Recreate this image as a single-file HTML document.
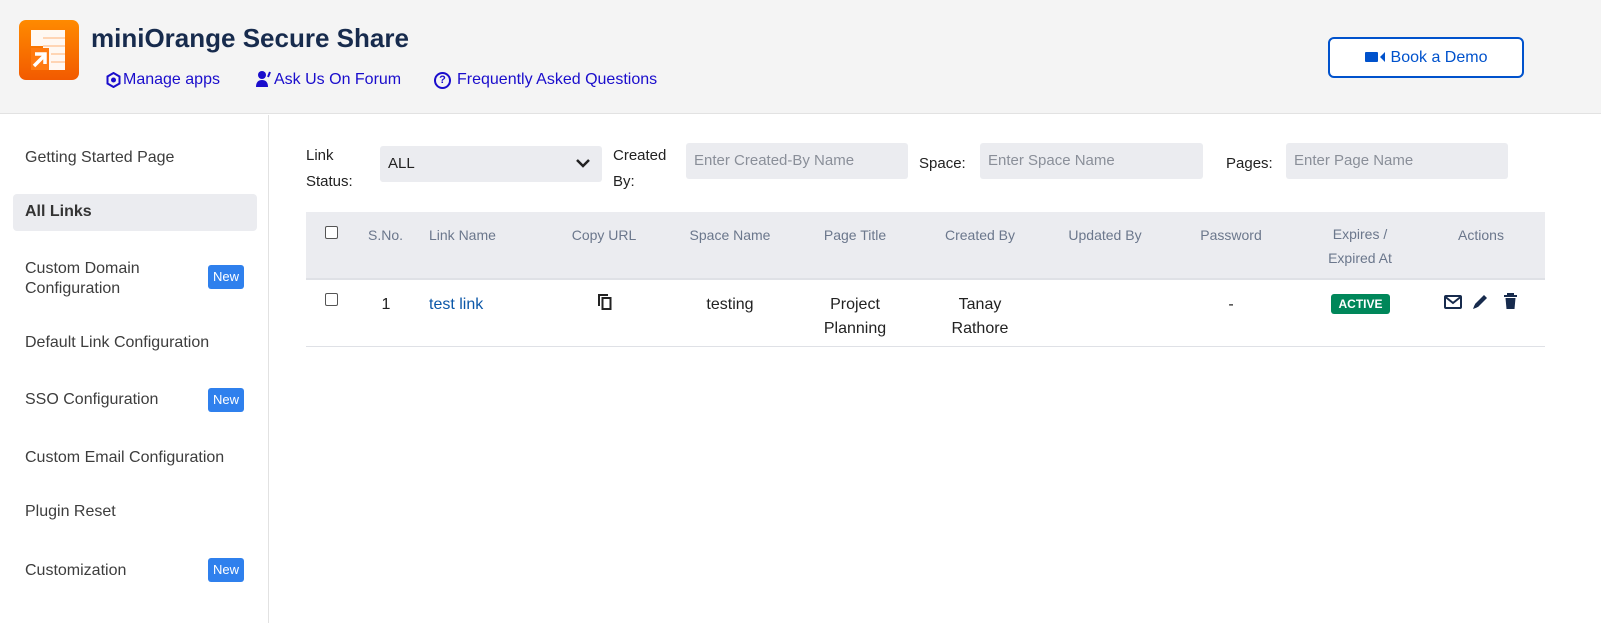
<!DOCTYPE html>
<html><head><meta charset="utf-8"><style>
*{margin:0;padding:0;box-sizing:border-box}
body{width:1601px;height:623px;background:#fff;font-family:"Liberation Sans",sans-serif;position:relative;overflow:hidden;color:#172b4d}
.a{position:absolute;white-space:nowrap}
.hdr{position:absolute;left:0;top:0;width:1601px;height:114px;background:#f4f4f4;border-bottom:1px solid #e2e2e2}
.side{position:absolute;left:268px;top:115px;width:1px;height:508px;background:#e2e2e2}
.nav{font-size:16px;color:#3d3d3d;left:25px}
.new{position:absolute;left:208px;width:36px;height:24px;background:#2f80ed;color:#fff;font-size:13px;border-radius:3px;text-align:center;line-height:24px}
.lnk{font-size:16px;color:#1a0dcc;top:71px}
.lbl{font-size:15px;color:#222}
.inp{position:absolute;background:#ebecf0;border-radius:3px;height:36px;font-size:15px;color:#8a8f99;line-height:36px;padding-left:8px}
.th{font-size:14px;color:#6b778c;top:227px;text-align:center}
.td{font-size:16px;color:#222;top:293px;text-align:center;line-height:24px}
.cb{position:absolute;width:13px;height:13px;border:1px solid #555;border-radius:2px;background:#fff}
</style></head><body>
<div class="hdr"></div>
<div class="side"></div>
<svg class="a" style="left:19px;top:20px" width="60" height="60" viewBox="0 0 60 60"><defs><linearGradient id="g" x1="0" y1="0" x2="0" y2="1"><stop offset="0" stop-color="#ff8a00"/><stop offset="1" stop-color="#f25a00"/></linearGradient></defs><rect width="60" height="60" rx="7" fill="url(#g)"/><path d="M12 10h34v40H24V26H12z" fill="#fff" opacity=".95"/><path d="M24 18h22M24 26h22M32 34h14M32 42h14" stroke="#ffc9a0" stroke-width="1.5"/><rect x="12" y="28" width="18" height="22" fill="#ff7a10"/><path d="M15 46l10-10M16 34h10v10" stroke="#fff" stroke-width="3.5" fill="none"/></svg>
<div class="a" style="left:91px;top:23px;font-size:26px;font-weight:bold;color:#172b4d">miniOrange Secure Share</div>
<svg class="a" style="left:106px;top:72px" width="15" height="16" viewBox="0 0 15 16"><path d="M7.5 1l6 3.5v7l-6 3.5-6-3.5v-7z" stroke="#1a0dcc" stroke-width="2" fill="none"/><circle cx="7.5" cy="8" r="2.5" fill="#1a0dcc"/></svg>
<div class="a lnk" style="left:123px">Manage apps</div>
<svg class="a" style="left:256px;top:70px" width="16" height="18" viewBox="0 0 16 18"><circle cx="6" cy="5" r="4" fill="#1a0dcc"/><path d="M0 17c0-5 2.5-7 6-7s6 2 6 7z" fill="#1a0dcc"/><path d="M14 2l-2 5" stroke="#1a0dcc" stroke-width="2"/></svg>
<div class="a lnk" style="left:274px">Ask Us On Forum</div>
<div class="a" style="left:434px;top:72px;width:17px;height:17px;border:2px solid #1a0dcc;border-radius:50%;font-size:11px;text-align:center;line-height:13px;font-weight:bold;color:#1a0dcc">?</div>
<div class="a lnk" style="left:457px">Frequently Asked Questions</div>
<div class="a" style="left:1328px;top:37px;width:196px;height:41px;border:2px solid #0052cc;border-radius:6px;background:#fff;color:#0052cc;font-size:16px;line-height:37px;text-align:center"><span style="display:inline-block;width:13px;height:10px;background:#0052cc;border-radius:1px;margin-right:2px"></span><span style="display:inline-block;width:0;height:0;border-top:5px solid transparent;border-bottom:5px solid transparent;border-right:5px solid #0052cc;margin-right:6px"></span>Book a Demo</div>

<div class="a nav" style="top:149px">Getting Started Page</div>
<div class="a" style="left:13px;top:194px;width:244px;height:37px;background:#ebecf0;border-radius:4px"></div>
<div class="a nav" style="top:203px;font-weight:bold;color:#333">All Links</div>
<div class="a nav" style="top:259px;line-height:20px">Custom Domain<br>Configuration</div>
<div class="new" style="top:265px">New</div>
<div class="a nav" style="top:334px">Default Link Configuration</div>
<div class="a nav" style="top:391px">SSO Configuration</div>
<div class="new" style="top:388px">New</div>
<div class="a nav" style="top:449px">Custom Email Configuration</div>
<div class="a nav" style="top:503px">Plugin Reset</div>
<div class="a nav" style="top:562px">Customization</div>
<div class="new" style="top:558px">New</div>

<div class="a lbl" style="left:306px;top:143px;line-height:26px">Link<br>Status:</div>
<div class="inp" style="left:380px;top:146px;width:222px;color:#222">ALL<svg style="position:absolute;right:12px;top:12px" width="14" height="10" viewBox="0 0 14 10"><path d="M1 2l6 6 6-6" stroke="#222" stroke-width="2.5" fill="none"/></svg></div>
<div class="a lbl" style="left:613px;top:143px;line-height:26px">Created<br>By:</div>
<div class="inp" style="left:686px;top:143px;width:222px">Enter Created-By Name</div>
<div class="a lbl" style="left:919px;top:155px">Space:</div>
<div class="inp" style="left:980px;top:143px;width:223px">Enter Space Name</div>
<div class="a lbl" style="left:1226px;top:155px">Pages:</div>
<div class="inp" style="left:1286px;top:143px;width:222px">Enter Page Name</div>

<div class="a" style="left:306px;top:212px;width:1239px;height:68px;background:#ebecf0;border-bottom:2px solid #dfe1e6"></div>
<div class="a" style="left:306px;top:346px;width:1239px;height:1px;background:#dfe1e6"></div>
<div class="cb" style="left:325px;top:226px"></div>
<div class="cb" style="left:325px;top:293px"></div>
<div class="a th" style="left:368px">S.No.</div>
<div class="a th" style="left:429px">Link Name</div>
<div class="a th" style="left:544px;width:120px">Copy URL</div>
<div class="a th" style="left:670px;width:120px">Space Name</div>
<div class="a th" style="left:795px;width:120px">Page Title</div>
<div class="a th" style="left:920px;width:120px">Created By</div>
<div class="a th" style="left:1045px;width:120px">Updated By</div>
<div class="a th" style="left:1171px;width:120px">Password</div>
<div class="a th" style="left:1300px;width:120px;line-height:24px;top:222px">Expires /<br>Expired At</div>
<div class="a th" style="left:1421px;width:120px">Actions</div>

<div class="a td" style="left:376px;width:20px">1</div>
<div class="a td" style="left:429px;color:#0b57a8">test link</div>
<svg class="a" style="left:597px;top:293px" width="16" height="18" viewBox="0 0 16 18"><path d="M2 13V2h9" stroke="#222" stroke-width="2" fill="none"/><rect x="5.5" y="5" width="8" height="11" stroke="#222" stroke-width="2" fill="none"/></svg>
<div class="a td" style="left:670px;width:120px">testing</div>
<div class="a td" style="left:795px;width:120px">Project<br>Planning</div>
<div class="a td" style="left:920px;width:120px">Tanay<br>Rathore</div>
<div class="a td" style="left:1171px;width:120px">-</div>
<div class="a" style="left:1331px;top:294px;width:59px;height:20px;background:#00875a;border-radius:3px;color:#fff;font-size:12px;font-weight:bold;text-align:center;line-height:20px">ACTIVE</div>
<svg class="a" style="left:1444px;top:295px" width="18" height="14" viewBox="0 0 18 14"><rect x="1" y="1" width="16" height="12" rx="1" stroke="#172b4d" stroke-width="2" fill="none"/><path d="M1.5 2l7.5 6 7.5-6" stroke="#172b4d" stroke-width="2" fill="none"/></svg>
<svg class="a" style="left:1472px;top:293px" width="17" height="17" viewBox="0 0 17 17"><path d="M2 15l1-4 9-9 3 3-9 9z" fill="#172b4d"/><path d="M1 16l1.5-4 2.5 2.5z" fill="#172b4d"/></svg>
<svg class="a" style="left:1503px;top:293px" width="15" height="17" viewBox="0 0 15 17"><path d="M1 3h13M5 3V1h5v2" stroke="#172b4d" stroke-width="2" fill="none"/><path d="M2.5 5h10l-1 11h-8z" fill="#172b4d"/></svg>
</body></html>
